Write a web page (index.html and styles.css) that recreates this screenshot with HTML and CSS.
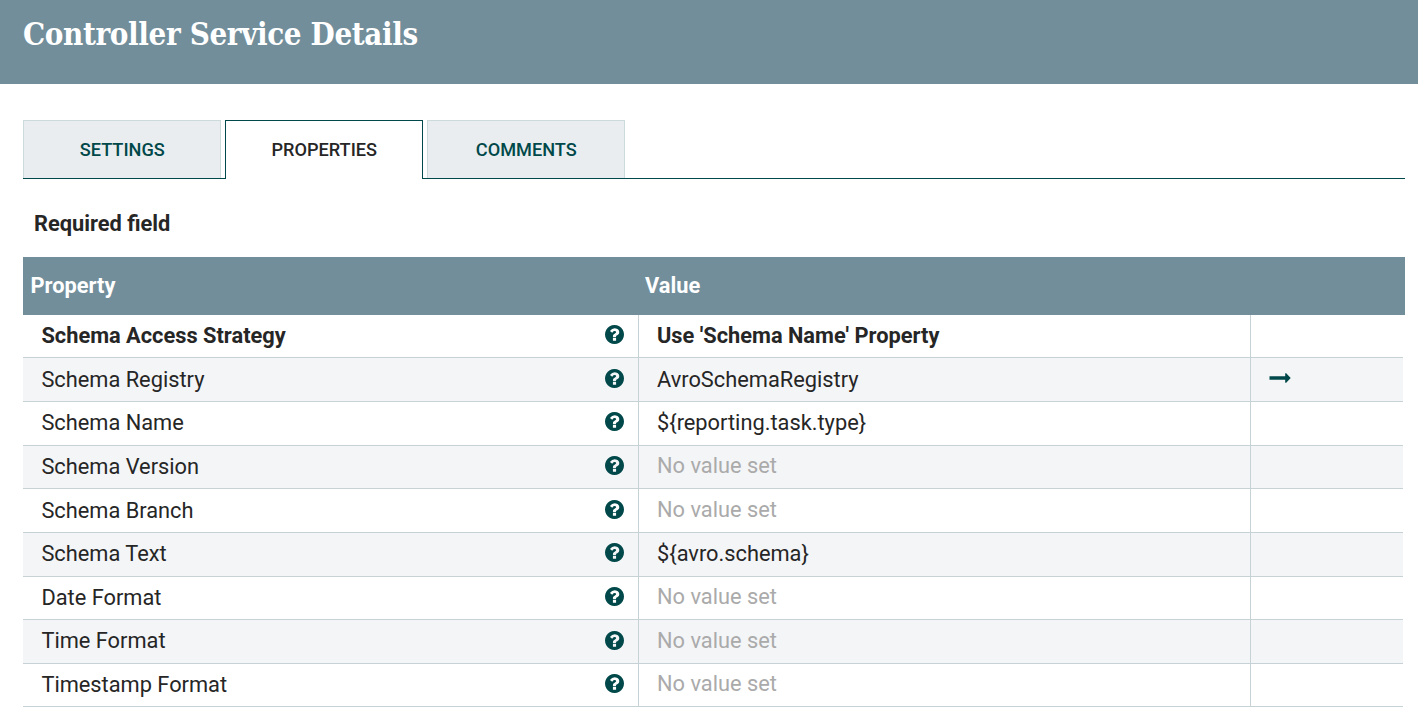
FILE: index.html
```html
<!DOCTYPE html>
<html lang="en">
<head>
<meta charset="utf-8">
<title>Controller Service Details</title>
<link rel="stylesheet" href="styles.css">
</head>
<body>
<svg class="defs" width="0" height="0">
  <symbol id="help" viewBox="0 0 1536 1536">
    <path d="M896 1248v-192q0-14-9-23t-23-9H672q-14 0-23 9t-9 23v192q0 14 9 23t23 9h192q14 0 23-9t9-23zm256-672q0-88-55.500-163T958 297t-170-41q-243 0-371 213-15 24 8 42l132 100q7 6 19 6 16 0 25-12 53-68 86-92 34-24 86-24 48 0 85.500 26t37.500 59q0 38-20 61t-68 45q-63 28-115.500 86.500T640 892v36q0 14 9 23t23 9h192q14 0 23-9t9-23q0-19 21.500-49.500T972 829q32-18 49-28.500t46-35 44.500-48 28-60.500 12.500-81zm384 192q0 209-103 385.500T1153.500 1433 768 1536t-385.500-103T103 1153.500 0 768t103-385.500T382.500 103 768 0t385.500 103T1433 382.500 1536 768z"/>
  </symbol>
</svg>
<header class="dialog-header"><h1>Controller Service Details</h1></header>
<main class="content">
  <nav class="tabs">
    <div class="tab">SETTINGS</div>
    <div class="tab selected">PROPERTIES</div>
    <div class="tab">COMMENTS</div>
  </nav>
  <div class="required">Required field</div>
  <section class="table">
    <div class="table-head"><span>Property</span><span>Value</span></div>
    <div class="rows">
      <div class="row short bold"><div class="name"><span>Schema Access Strategy</span><svg class="help"><use href="#help"/></svg></div><div class="value">Use 'Schema Name' Property</div><div class="action"></div></div>
      <div class="row low-icon"><div class="name"><span>Schema Registry</span><svg class="help"><use href="#help"/></svg></div><div class="value">AvroSchemaRegistry</div><div class="action"><svg class="arrow" viewBox="0 0 22 10"><path d="M.5 3.200h15.700V.3h1L21.700 5l-4.500 4.700h-1V6.800H.5z"/></svg></div></div>
      <div class="row raised"><div class="name"><span>Schema Name</span><svg class="help"><use href="#help"/></svg></div><div class="value">${reporting.task.type}</div><div class="action"></div></div>
      <div class="row short"><div class="name"><span>Schema Version</span><svg class="help"><use href="#help"/></svg></div><div class="value unset">No value set</div><div class="action"></div></div>
      <div class="row low-icon"><div class="name"><span>Schema Branch</span><svg class="help"><use href="#help"/></svg></div><div class="value unset">No value set</div><div class="action"></div></div>
      <div class="row raised"><div class="name"><span>Schema Text</span><svg class="help"><use href="#help"/></svg></div><div class="value">${avro.schema}</div><div class="action"></div></div>
      <div class="row short"><div class="name"><span>Date Format</span><svg class="help"><use href="#help"/></svg></div><div class="value unset">No value set</div><div class="action"></div></div>
      <div class="row raised low-icon"><div class="name"><span>Time Format</span><svg class="help"><use href="#help"/></svg></div><div class="value unset">No value set</div><div class="action"></div></div>
      <div class="row short"><div class="name"><span>Timestamp Format</span><svg class="help"><use href="#help"/></svg></div><div class="value unset">No value set</div><div class="action"></div></div>
    </div>
  </section>
</main>
</body>
</html>
```
FILE: styles.css
```css
* { box-sizing: border-box; }
body { margin: 0; background: #fff; color: #262626; font-family: Roboto, "Liberation Sans", sans-serif; font-size: 21.8px; }
.defs { display: block; }
.dialog-header { height: 84px; padding: 14px 23px 0; background: #728e9b; color: #fff; }
.dialog-header h1 { margin: 0; font: bold 31px/40px "Roboto Slab", "DejaVu Serif Condensed", "DejaVu Serif", serif; font-stretch: condensed; letter-spacing: -0.36px; white-space: nowrap; }
.content { padding: 36px 13px 0 23px; }
.tabs { display: flex; gap: 4px; height: 59px; background: linear-gradient(#004849, #004849) bottom / 100% 1px no-repeat; }
.tab { width: 198px; height: 58px; padding-left: 0.5px; border: 1px solid #ccdadb; border-bottom: 0; background: #e9edf0; color: #004849; font-size: 18.15px; font-weight: 500; line-height: 57px; text-align: center; }
.tab.selected { height: 59px; border-color: #004849; background: #fff; color: #262626; }
.required { height: 78px; padding: 30px 11px 0; font-weight: 700; line-height: 30px; }
.table-head { display: grid; grid-template-columns: 614.500px 1fr; height: 58px; padding-left: 7.500px; background: #728e9b; color: #fff; font-weight: 700; line-height: 57px; }
.rows { margin-right: 2px; }
.row { display: grid; grid-template-columns: 616px 612px 1fr; height: 44px; border-bottom: 1px solid #c7d2d7; line-height: 43px; }
.row.short { height: 43px; line-height: 42px; }
.row.raised { line-height: 41px; }
.row:nth-child(even) { background: #f4f5f7; }
.row.bold { font-weight: 700; }
.name, .value { border-right: 1px solid #c7d2d7; }
.name { display: flex; justify-content: space-between; padding: 0 14.5px 0 18.4px; }
.help { width: 19px; height: 19px; margin-top: 10px; fill: #004849; }
.low-icon .help { margin-top: 11px; }
.value { padding-left: 18px; }
.unset { color: #aaa; line-height: 41px; }
.short .unset { line-height: 40px; }
.action { padding: 15px 0 0 18px; }
.arrow { display: block; width: 22px; height: 10px; fill: #004849; }
```
